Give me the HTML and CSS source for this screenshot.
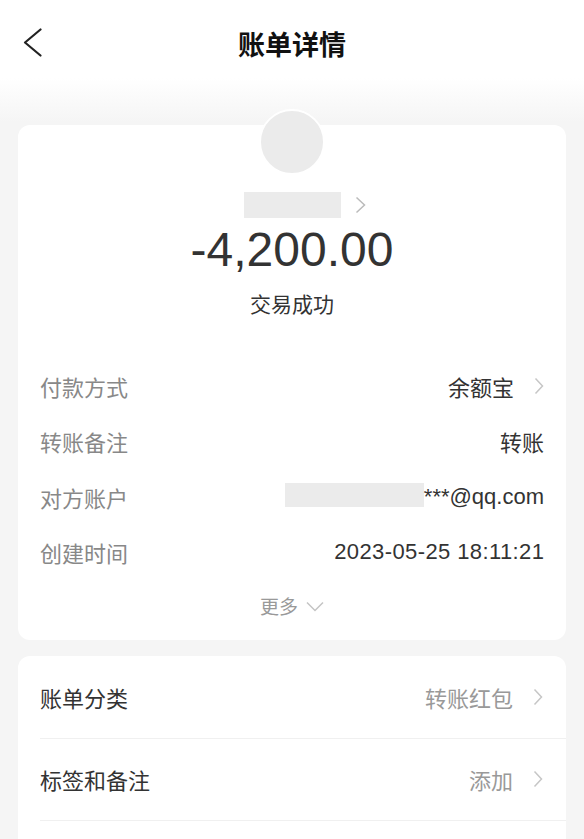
FILE: index.html
```html
<!DOCTYPE html>
<html lang="zh-CN">
<head>
  <meta charset="UTF-8">
  <meta name="viewport" content="width=device-width, initial-scale=1.0">
  <title>账单详情</title>
  <link rel="stylesheet" href="styles.css">
</head>
<body>
  <header class="top-bar">
    <svg class="back" width="20" height="30" viewBox="0 0 20 30">
      <polyline points="17.5,1.5 2,14.5 17.5,27.5" fill="none" stroke="#222" stroke-width="2.2" stroke-linecap="round" stroke-linejoin="round"/>
    </svg>
    <h1>账单详情</h1>
  </header>

  <section class="card summary">
    <div class="avatar"></div>
    <div class="name-row">
      <span class="mask name-mask"></span>
      <svg class="name-arrow" width="11" height="18" viewBox="0 0 11 18">
        <polyline points="1.5,1.5 9.5,9 1.5,16.5" fill="none" stroke="#bbb" stroke-width="1.5"/>
      </svg>
    </div>
    <div class="amount">-4,200.00</div>
    <div class="status">交易成功</div>

    <div class="info-list">
      <div class="info-row">
        <span class="label">付款方式</span>
        <span class="value">余额宝
          <svg class="arrow" width="10" height="18" viewBox="0 0 10 18">
            <polyline points="1.5,1.5 8.5,9 1.5,16.5" fill="none" stroke="#c6c6c6" stroke-width="1.5"/>
          </svg>
        </span>
      </div>
      <div class="info-row">
        <span class="label">转账备注</span>
        <span class="value">转账</span>
      </div>
      <div class="info-row">
        <span class="label">对方账户</span>
        <span class="value"><span class="mask account-mask"></span>***@qq.com</span>
      </div>
      <div class="info-row">
        <span class="label">创建时间</span>
        <span class="value date">2023-05-25 18:11:21</span>
      </div>
    </div>

    <div class="more">更多
      <svg width="18" height="11" viewBox="0 0 18 11">
        <polyline points="1,1.5 9,9.5 17,1.5" fill="none" stroke="#c4c4c4" stroke-width="1.5"/>
      </svg>
    </div>
  </section>

  <section class="card menu">
    <div class="menu-row">
      <span class="menu-label">账单分类</span>
      <span class="menu-value">转账红包
        <svg class="arrow" width="10" height="18" viewBox="0 0 10 18">
          <polyline points="1.5,1.5 8.5,9 1.5,16.5" fill="none" stroke="#c6c6c6" stroke-width="1.5"/>
        </svg>
      </span>
    </div>
    <div class="menu-row">
      <span class="menu-label">标签和备注</span>
      <span class="menu-value">添加
        <svg class="arrow" width="10" height="18" viewBox="0 0 10 18">
          <polyline points="1.5,1.5 8.5,9 1.5,16.5" fill="none" stroke="#c6c6c6" stroke-width="1.5"/>
        </svg>
      </span>
    </div>
    <div class="menu-row"></div>
  </section>
</body>
</html>
```

FILE: styles.css
```css
body {
    margin: 0;
    font-family: "Liberation Sans", "Noto Sans CJK SC", sans-serif;
    color: #333;
    background: linear-gradient(#fff 0, #fff 78px, #f5f5f5 122px, #f5f5f5 100%);
    min-height: 100vh;
}

.top-bar {
    height: 87px;
    display: flex;
    align-items: center;
    justify-content: center;
    position: relative;
}

.top-bar h1 {
    margin: 0;
    font-size: 27px;
    font-weight: bold;
    color: #111;
    font-family: "Noto Sans CJK SC", sans-serif;
}

.back {
    position: absolute;
    left: 23px;
    top: 28px;
}

.card {
    background: #fff;
    border-radius: 12px;
    margin: 0 18px;
}

.summary {
    margin-top: 38px;
    padding: 0 22px 19px;
    display: flex;
    flex-direction: column;
    align-items: center;
}

.avatar {
    width: 62px;
    height: 62px;
    border-radius: 50%;
    background: #ebebeb;
    border: 2px solid #fff;
    margin-top: -16px;
}

.mask {
    display: inline-block;
    background: #ebebeb;
}

.name-row {
    margin-top: 17px;
    display: flex;
    align-items: center;
    gap: 14px;
    padding-left: 25px;
}

.name-mask {
    width: 97px;
    height: 26px;
}

.amount {
    margin-top: 4px;
    font-size: 48px;
    line-height: 56px;
    color: #333;
}

.status {
    margin-top: 10px;
    font-size: 21px;
    line-height: 30px;
    color: #333;
    font-family: "Noto Sans CJK SC", sans-serif;
}

.info-list {
    align-self: stretch;
    margin-top: 40px;
}

.info-row {
    height: 55.5px;
    display: flex;
    align-items: center;
    justify-content: space-between;
    font-size: 22px;
}

.label {
    color: #888;
    font-family: "Noto Sans CJK SC", sans-serif;
}

.value {
    display: flex;
    align-items: center;
    color: #333;
}

.date {
    letter-spacing: 0.4px;
    margin-right: -0.4px;
}

.arrow {
    margin-left: 20px;
}

.account-mask {
    width: 139px;
    height: 24px;
    margin-top: -4px;
}

.more {
    margin-top: 11px;
    display: flex;
    align-items: center;
    gap: 8px;
    font-size: 19px;
    line-height: 30px;
    color: #999;
    font-family: "Noto Sans CJK SC", sans-serif;
}

.menu {
    margin-top: 16px;
    padding-left: 22px;
}

.menu-row {
    height: 82.5px;
    display: flex;
    align-items: center;
    justify-content: space-between;
    padding-right: 23px;
    border-bottom: 1px solid #f0f0f0;
    font-size: 22px;
    font-family: "Noto Sans CJK SC", sans-serif;
    box-sizing: border-box;
}

.menu-label {
    color: #333;
}

.menu-value {
    display: flex;
    align-items: center;
    color: #999;
}
```
